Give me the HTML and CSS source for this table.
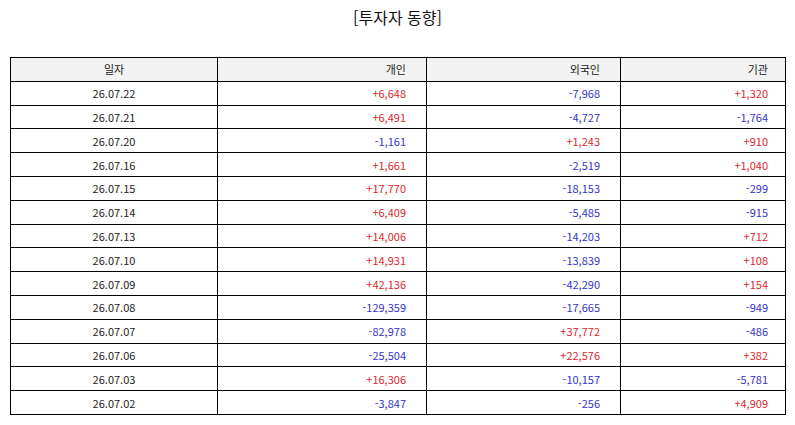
FILE: index.html
```html
<!DOCTYPE html>
<html lang="ko">
<head>
<meta charset="utf-8">
<link rel="stylesheet" href="styles.css">
</head>
<body>
<div class="page">
  <h1 class="title">[투자자 동향]</h1>
  <table class="grid">
    <colgroup>
      <col class="c-date"><col class="c-ind"><col class="c-for"><col class="c-inst">
    </colgroup>
    <thead>
      <tr><th class="date">일자</th><th>개인</th><th>외국인</th><th class="last">기관</th></tr>
    </thead>
    <tbody>
      <tr><td class="date">26.07.22</td><td class="up">+6,648</td><td class="dn">-7,968</td><td class="up last">+1,320</td></tr>
      <tr><td class="date">26.07.21</td><td class="up">+6,491</td><td class="dn">-4,727</td><td class="dn last">-1,764</td></tr>
      <tr><td class="date">26.07.20</td><td class="dn">-1,161</td><td class="up">+1,243</td><td class="up last">+910</td></tr>
      <tr><td class="date">26.07.16</td><td class="up">+1,661</td><td class="dn">-2,519</td><td class="up last">+1,040</td></tr>
      <tr><td class="date">26.07.15</td><td class="up">+17,770</td><td class="dn">-18,153</td><td class="dn last">-299</td></tr>
      <tr><td class="date">26.07.14</td><td class="up">+6,409</td><td class="dn">-5,485</td><td class="dn last">-915</td></tr>
      <tr><td class="date">26.07.13</td><td class="up">+14,006</td><td class="dn">-14,203</td><td class="up last">+712</td></tr>
      <tr><td class="date">26.07.10</td><td class="up">+14,931</td><td class="dn">-13,839</td><td class="up last">+108</td></tr>
      <tr><td class="date">26.07.09</td><td class="up">+42,136</td><td class="dn">-42,290</td><td class="up last">+154</td></tr>
      <tr><td class="date">26.07.08</td><td class="dn">-129,359</td><td class="dn">-17,665</td><td class="dn last">-949</td></tr>
      <tr><td class="date">26.07.07</td><td class="dn">-82,978</td><td class="up">+37,772</td><td class="dn last">-486</td></tr>
      <tr><td class="date">26.07.06</td><td class="dn">-25,504</td><td class="up">+22,576</td><td class="up last">+382</td></tr>
      <tr><td class="date">26.07.03</td><td class="up">+16,306</td><td class="dn">-10,157</td><td class="dn last">-5,781</td></tr>
      <tr><td class="date">26.07.02</td><td class="dn">-3,847</td><td class="dn">-256</td><td class="up last">+4,909</td></tr>
    </tbody>
  </table>
</div>
</body>
</html>
```

FILE: styles.css
```css
html, body {
  margin: 0;
  padding: 0;
  background: #ffffff;
}
.page {
  padding: 0 10px;
  font-family: "Noto Sans CJK KR", "Noto Sans", sans-serif;
  color: #222222;
}
.title {
  margin: 0;
  padding-top: 5px;
  height: 57px;
  box-sizing: border-box;
  text-align: center;
  font-size: 16px;
  font-weight: normal;
  line-height: 24px;
  color: #111111;
}
.grid {
  width: 775px;
  border-collapse: collapse;
  table-layout: fixed;
  font-size: 11px;
}
.c-date { width: 207px; }
.c-ind { width: 209px; }
.c-for { width: 194px; }
.c-inst { width: 165px; }
.grid tr {
  height: 23.8px;
}
.grid th, .grid td {
  border: 1px solid #000000;
  padding: 0 20px 0 0;
  text-align: right;
  line-height: 14px;
}
.grid th {
  background: #f2f2f2;
  font-weight: normal;
  color: #222222;
}
.grid .date {
  text-align: center;
  padding: 0;
}
.grid .last {
  padding-right: 17px;
}
.up { color: #e0262e; }
.dn { color: #3434cc; }
```
